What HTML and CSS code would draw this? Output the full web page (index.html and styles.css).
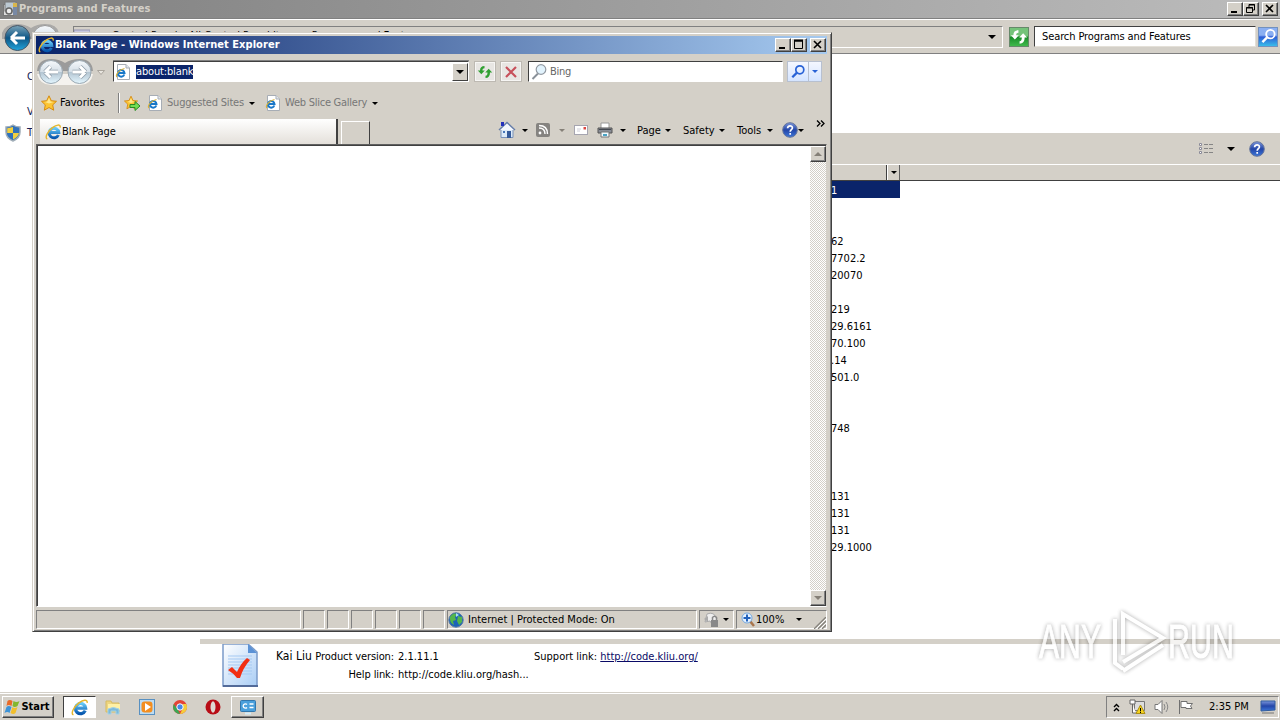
FILE: index.html
```
<!DOCTYPE html>
<html lang="en">
<head>
  <meta charset="UTF-8" />
  <meta name="viewport" content="width=device-width, initial-scale=1.0" />
  <title>Programs and Features</title>
  <link rel="stylesheet" href="styles.css">
</head>
<body>

  <!-- shared icons -->
  <svg class="defs" width="0" height="0">
    <defs>
      <linearGradient id="blue" x1="0" y1="0" x2="0" y2="1"><stop offset="0" stop-color="#65c9f8"/><stop offset="1" stop-color="#0757ae"/></linearGradient>
      <linearGradient id="glass" x1="0" y1="0" x2="0" y2="1"><stop offset="0" stop-color="#f6f9fc"/><stop offset=".48" stop-color="#d5dfe7"/><stop offset=".5" stop-color="#b3c4d1"/><stop offset="1" stop-color="#e4f7ff"/></linearGradient>
      <linearGradient id="navy" x1="0" y1="0" x2="0" y2="1"><stop offset="0" stop-color="#7aa3b8"/><stop offset=".5" stop-color="#0d5686"/><stop offset="1" stop-color="#21a5dc"/></linearGradient>
      <linearGradient id="helpblue" x1="0" y1="0" x2="0" y2="1"><stop offset="0" stop-color="#7b96dc"/><stop offset=".5" stop-color="#2446a8"/><stop offset="1" stop-color="#3c76d8"/></linearGradient>
      <linearGradient id="paper" x1="0" y1="0" x2="1" y2="1"><stop offset="0" stop-color="#ffffff"/><stop offset="1" stop-color="#a9cdf5"/></linearGradient>
    </defs>
    <symbol id="ie" viewBox="0 0 16 16">
      <path d="M13.4 11A4.800 4.800 0 1 1 13.800 8.600H5" fill="none" stroke="url(#blue)" stroke-width="3"/>
      <path d="M2.300 15C-.8 13.700 3 7 7.500 3.600 11.300.8 15.600-.3 15.200 3.600" fill="none" stroke="#e5b62d" stroke-width="1.400"/>
    </symbol>
    <symbol id="iepage" viewBox="0 0 16 16">
      <path d="M2.500.5H11L14.500 4V15.500H2.500Z" fill="#fff" stroke="#a7adb5"/>
      <path d="M11 .5V4H14.500" fill="#e3e8ee" stroke="#a7adb5"/>
      <path d="M9.300 10.500A3.300 3.300 0 1 1 9.500 9H4" fill="none" stroke="#1877c8" stroke-width="2"/>
      <path d="M2 13C0 11 4 5.500 9.500 4.500" fill="none" stroke="#d8b13c" stroke-width="1.200"/>
    </symbol>
    <symbol id="star" viewBox="0 0 16 16">
      <path d="M8 .8L10.300 5.700 15.500 6.300 11.700 9.900 12.700 15.200 8 12.500 3.300 15.200 4.300 9.900.5 6.300 5.700 5.700Z" fill="#fcc533" stroke="#d68b13"/>
      <path d="M8 2.800L9.500 6.500 12.500 7 8 8.500 4 7 6.300 6.500Z" fill="#ffe78c"/>
    </symbol>
    <symbol id="help" viewBox="0 0 16 16">
      <circle cx="8" cy="8" r="7.300" fill="url(#helpblue)" stroke="#66759b"/>
      <path d="M5.600 6.200C5.600 3 10.600 3.200 10.400 6 10.300 7.600 8.200 7.700 8.200 9.800M8.200 11V12.800" fill="none" stroke="#fff" stroke-width="1.700"/>
    </symbol>
    <symbol id="refresh" viewBox="0 0 16 16">
      <path d="M.8 6.500H3C3 3.500 4.500 2 7.500 2V4.200C6 4.200 5.500 5 5.500 6.500H7.800L4.300 10.300Z"/>
      <path d="M15.200 8.500H13C13 12 11.500 14 8.500 14V11.800C10 11.800 10.500 10.500 10.500 8.500H8.200L11.700 4.700Z"/>
    </symbol>
    <symbol id="lens" viewBox="0 0 16 16">
      <circle cx="9.800" cy="5.800" r="4" fill="none" stroke="currentColor" stroke-width="1.700"/>
      <path d="M6.700 8.900L2.300 13.300" stroke="currentColor" stroke-width="2.300"/>
    </symbol>
  </svg>

  <div class="window programs">
    <div class="title-bar inactive">
      <svg class="app-icon" width="16" height="16" viewBox="0 0 16 16">
        <rect x="1.500" y="3.500" width="10" height="11" fill="#ddd" stroke="#777"/>
        <rect x="3" y="1" width="11" height="9" fill="#bcc9d3" stroke="#777"/>
        <path d="M11 2H15V14H11Z" fill="#7889a5"/><path d="M11 2H15V6H11Z" fill="#d9b64c"/>
        <circle cx="7" cy="10" r="3" fill="#eee" stroke="#666" stroke-width="1.500"/>
      </svg>
      <span class="title">Programs and Features</span>
      <div class="controls">
        <button><svg width="14" height="12"><path d="M3 9H9" stroke="#000" stroke-width="2"/></svg></button>
        <button><svg width="14" height="12"><path d="M5 4V1.500H10.500V7H8M5 2H11M2.500 4.500H8.500V9.500H2.500ZM2 5H9" fill="none" stroke="#000"/></svg></button>
        <button class="close"><svg width="14" height="12"><path d="M3 2L10 9M10 2L3 9" stroke="#000" stroke-width="1.600"/></svg></button>
      </div>
    </div>

    <div class="explorer-nav">
      <svg class="round-nav" width="60" height="32" viewBox="0 0 60 32">
        <path d="M2 12Q5 3 17 3 25 3 31 7 37 3 45 3 57 3 59 12V18H2Z" fill="#aaa9a7"/>
        <circle cx="45" cy="17" r="12.500" fill="url(#glass)" stroke="#999"/>
        <circle cx="17.500" cy="17" r="12.500" fill="url(#navy)" stroke="#456"/>
        <path d="M11 17L17 11M11 17L17 23M12 17H25" fill="none" stroke="#fff" stroke-width="3"/>
      </svg>
      <div class="crumbs">
        <svg width="16" height="16"><path d="M0 1H16V12H0ZM0 4H16" fill="#c9c9df" stroke="#9696b4"/></svg>
        <span>Control Panel ▸ All Control Panel Items ▸ Programs and Features</span>
        <i class="arrow"></i>
      </div>
      <div class="go"><svg width="18" height="18"><use href="#refresh"/></svg></div>
      <div class="search-field">Search Programs and Features</div>
      <div class="search-go"><svg width="17" height="17"><use href="#lens"/></svg></div>
    </div>

    <div class="explorer-body">
      <div class="sidebar">
        <p class="home">Control Panel Home</p>
        <p class="link">View installed updates</p>
        <p class="link shield">
          <svg width="16" height="18" viewBox="0 0 16 18"><path d="M8 1Q11 3 15 3V8Q15 14 8 17 1 14 1 8V3Q5 3 8 1Z" fill="#3172ba" stroke="#a0adb8" stroke-width="1.500"/><path d="M8 9H2.200V4.200Q5 4 8 3ZM8 9H14Q13 13 8 15.500Z" fill="#f2cf40"/></svg>
          Turn Windows features on or off
        </p>
      </div>
      <div class="main">
        <div class="intro"></div>
        <div class="toolbar">
          <svg width="16" height="14"><path d="M1.500 1.500H3.500V3.500H1.500ZM1.500 5.500H3.500V7.500H1.500ZM1.500 9.500H3.500V11.500H1.500Z" fill="#fff" stroke="#8a8a98"/><path d="M6 2.500H15M6 6.500H15M6 10.500H15" stroke="#858585" stroke-dasharray="4 1"/></svg>
          <i class="arrow"></i>
          <svg width="16" height="16"><use href="#help"/></svg>
        </div>
        <div class="list-head">
          <div class="col"></div>
          <div class="col-arrow"><i class="arrow small"></i></div>
        </div>
        <ul class="versions">
          <li class="selected">1</li>
          <li></li>
          <li></li>
          <li>62</li>
          <li>7702.2</li>
          <li>20070</li>
          <li></li>
          <li>219</li>
          <li>29.6161</li>
          <li>70.100</li>
          <li>.14</li>
          <li>501.0</li>
          <li></li>
          <li></li>
          <li>748</li>
          <li></li>
          <li></li>
          <li></li>
          <li>131</li>
          <li>131</li>
          <li>131</li>
          <li>29.1000</li>
        </ul>
        <div class="details">
          <svg width="37" height="44" viewBox="0 0 37 44">
            <path d="M1 0H26L35 8V42H1Z" fill="url(#paper)" stroke="#7b9bc9" stroke-width="1.500"/>
            <path d="M1 42H36" stroke="#536b99" stroke-width="2"/>
            <path d="M26 0V9H35Z" fill="#5b92d6"/>
            <path d="M6 12H30M6 15H30M6 18H30M6 21H30M6 24H30M6 27H30M6 30H30" stroke="#a5c9f2"/>
            <path d="M6 26L10 23 15 28Q19 19 25 14L28 16Q21 24 18 34H15Q11 29 6 26Z" fill="#f22e12"/>
          </svg>
          <div class="publisher">Kai Liu</div>
          <dl class="info">
            <dt>Product version:</dt><dd>2.1.11.1</dd>
            <dt>Help link:</dt><dd>http://code.kliu.org/hash...</dd>
          </dl>
          <div class="support">Support link: <a href="#">http://code.kliu.org/</a></div>
        </div>
      </div>
    </div>
  </div>

  <div class="window ie">
    <div class="title-bar active">
      <svg class="app-icon" width="16" height="16"><use href="#ie"/></svg>
      <span class="title">Blank Page - Windows Internet Explorer</span>
      <div class="controls">
        <button><svg width="14" height="12"><path d="M3 9H9" stroke="#000" stroke-width="2"/></svg></button>
        <button><svg width="14" height="12"><path d="M2.500 1V9.500H10.500V1M2 2H11" fill="none" stroke="#000"/><path d="M2 1.500H11" stroke="#000" stroke-width="2"/></svg></button>
        <button class="close"><svg width="14" height="12"><path d="M3 2L10 9M10 2L3 9" stroke="#000" stroke-width="1.600"/></svg></button>
      </div>
    </div>

    <div class="address-row">
      <svg class="round-nav" width="72" height="28" viewBox="0 0 72 28">
        <path d="M2 13Q3 1 16 1 24 1 30 5 36 1 45 1 57 1 58 13Z" fill="#9b9b9b"/>
        <path d="M2 16Q5 27 16 27H45Q56 27 58 16Z" fill="#f5f3ef"/>
        <circle cx="16" cy="14" r="11.500" fill="url(#glass)" stroke="#9aa8b2"/>
        <circle cx="44.500" cy="14" r="11.500" fill="url(#glass)" stroke="#9aa8b2"/>
        <path d="M10 14L15.500 8.500M10 14L15.500 19.500M11 14H23M50.500 14L45 8.500M50.500 14L45 19.500M49 14H37.500" fill="none" stroke="#8e9ca8" stroke-width="4.500"/>
        <path d="M10 14L15.500 8.500M10 14L15.500 19.500M11 14H23M50.500 14L45 8.500M50.500 14L45 19.500M49 14H37.500" fill="none" stroke="#fff" stroke-width="3"/>
        <path d="M62.500 12.500H69.500L66 16.500Z" fill="#e8e5df" stroke="#aaa59d"/>
      </svg>
      <div class="address">
        <svg width="16" height="16"><use href="#iepage"/></svg>
        <span class="url">about:blank</span>
        <div class="drop"><i class="arrow"></i></div>
      </div>
      <div class="tool-btn refresh"><svg width="16" height="16"><use href="#refresh"/></svg></div>
      <div class="tool-btn"><svg width="14" height="14"><path d="M2 2L12 12M12 2L2 12" stroke="#c7505b" stroke-width="2.200"/></svg></div>
      <div class="bing">
        <svg width="18" height="18" viewBox="0 0 18 18"><path d="M1.500 16L7 10.500" stroke="#899199" stroke-width="2"/><circle cx="10" cy="6.500" r="4.800" fill="#e2f3fd" stroke="#9299a2" stroke-width="1.200"/></svg>
        <span>Bing</span>
      </div>
      <div class="search-split">
        <span><svg width="16" height="16"><use href="#lens"/></svg></span>
        <span><i class="arrow small"></i></span>
      </div>
    </div>

    <div class="favorites-row">
      <svg width="16" height="16"><use href="#star"/></svg>
      <span class="fav">Favorites</span>
      <svg class="add" width="17" height="16"><use href="#star" width="14" height="15"/><path d="M6 9.500H11V6.500L16 11 11 15.500V12.500H6Z" fill="#73dd52" stroke="#298a24"/></svg>
      <svg class="site-icon" width="16" height="16"><use href="#iepage"/></svg>
      <span class="sites">Suggested Sites</span>
      <i class="arrow small"></i>
      <svg class="slice-icon" width="16" height="16"><use href="#iepage"/></svg>
      <span class="slice">Web Slice Gallery</span>
      <i class="arrow small"></i>
    </div>

    <div class="tab-row">
      <div class="tab"><svg width="16" height="16"><use href="#ie"/></svg><span>Blank Page</span></div>
      <div class="new-tab"></div>
      <div class="commands">
        <svg class="home-icon" width="18" height="18" viewBox="0 0 18 18"><path d="M3 8H15V16.500H3Z" fill="#dceaf8" stroke="#7891b8"/><path d="M1 9L9 1.500 17 9" fill="#f4f7fc" stroke="#657da9" stroke-width="1.500"/><path d="M3 1H6V5H3Z" fill="#2431bb"/><path d="M9 10H13V17H9Z" fill="#355b9b"/><path d="M5 10H7V12H5Z" fill="#4676b8"/></svg>
        <i class="arrow small home-arrow"></i>
        <svg class="feed-icon" width="14" height="14" viewBox="0 0 14 14"><rect width="14" height="14" rx="2" fill="#858380"/><path d="M3 5Q9 5 9 11M3 2.500Q11.500 2.500 11.500 11" fill="none" stroke="#fff" stroke-width="1.400"/><circle cx="4" cy="10" r="1.400" fill="#fff"/></svg>
        <i class="arrow small gray feed-arrow"></i>
        <svg class="mail-icon" width="14" height="11"><rect x=".5" y=".5" width="13" height="9" fill="#fff" stroke="#a6a5b0"/><path d="M3 4H7M3 6H6" stroke="#d0d0da"/><path d="M9.500 2H12V4.500H9.500Z" fill="#db4742"/></svg>
        <svg class="print-icon" width="16" height="16" viewBox="0 0 16 16"><path d="M4 1H12V7H4Z" fill="#fff" stroke="#999"/><path d="M1 6H15V11H1Z" fill="#898d96" stroke="#555"/><path d="M2 7H14V8H2Z" fill="#454951"/><path d="M4 10H12V15H4Z" fill="#f3faff" stroke="#777"/><path d="M6 12H10V14H6Z" fill="#4ba3c3"/></svg>
        <i class="arrow small print-arrow"></i>
        <span class="cmd">Page</span><i class="arrow small"></i>
        <span class="cmd safety">Safety</span><i class="arrow small"></i>
        <span class="cmd tools">Tools</span><i class="arrow small"></i>
        <svg class="help-icon" width="16" height="16"><use href="#help"/></svg>
        <i class="arrow small"></i>
        <svg class="more" width="9" height="7"><path d="M1 .5L4 3.500 1 6.500M5 .5L8 3.500 5 6.500" fill="none" stroke="#000" stroke-width="1.300"/></svg>
      </div>
    </div>

    <div class="page">
      <div class="scrollbar">
        <div class="scroll-btn"><i class="arrow gray up"></i></div>
        <div class="scroll-btn"><i class="arrow gray"></i></div>
      </div>
    </div>

    <div class="status-bar">
      <div class="pane message"></div>
      <div class="pane"></div>
      <div class="pane"></div>
      <div class="pane"></div>
      <div class="pane"></div>
      <div class="pane"></div>
      <div class="pane"></div>
      <div class="pane zone">
        <svg width="16" height="16" viewBox="0 0 16 16"><circle cx="8" cy="8" r="7.200" fill="#1c63b8" stroke="#557aa5"/><path d="M2 5Q5 0 9 2L7 5 8 8 5 9 6 13Q1 10 2 5ZM10 4L14 5 14 10 11 13 9 9Z" fill="#54b64b"/><path d="M8 1L11 3 8 5Z" fill="#a8e3f2"/></svg>
        <span>Internet | Protected Mode: On</span>
      </div>
      <div class="pane filter">
        <svg width="18" height="16" viewBox="0 0 18 16"><path d="M4 2Q11-1 14 7L9 12 7 9 2 10Z" fill="#eee" stroke="#aaa"/><path d="M1 7L5 4V10Z" fill="#aaa"/><rect x="8" y="8" width="7" height="7" fill="#898989"/><path d="M9.500 8V5.500Q11.500 3 13.500 5.500V8" fill="none" stroke="#888" stroke-width="1.500"/></svg>
        <i class="arrow small"></i>
      </div>
      <div class="pane zoom">
        <svg width="15" height="16" viewBox="0 0 15 16"><path d="M8.500 8.500L13 14" stroke="#a9754c" stroke-width="2.500"/><circle cx="6" cy="6" r="5" fill="#e5f2ff" stroke="#75a9e0"/><path d="M2.500 6H9.500M6 2.500V9.500" stroke="#2362bc" stroke-width="2"/></svg>
        <span>100%</span>
        <i class="arrow small"></i>
        <svg class="grip" width="12" height="12"><path d="M0 12L12 0M4 12L12 4M8 12L12 8" stroke="#85827b" stroke-width="1.300"/><path d="M2 12L12 2M6 12L12 6" stroke="#fff"/></svg>
      </div>
    </div>
  </div>

  <div class="taskbar">
    <div class="start">
      <svg width="17" height="16" viewBox="0 0 16 16"><path d="M3 2Q5 0 8 2L7 7Q4 5 2 7Z" fill="#e96a27"/><path d="M9 2Q12 4 15 2L13 7Q10 9 8 7Z" fill="#83b72f"/><path d="M2 8Q4 6 7 8L5 14Q3 12 0 14Z" fill="#3d93d7"/><path d="M8 8Q10 10 13 8L11 14Q9 16 6 14Z" fill="#f2bf2c"/></svg>
      <span>Start</span>
    </div>
    <div class="task current"><svg width="17" height="17"><use href="#ie"/></svg></div>
    <div class="quick">
      <svg width="16" height="16" viewBox="0 0 16 16"><path d="M1 2H6L7 4H14V13H1Z" fill="#edd581" stroke="#d7bb60"/><path d="M3 5H15V11H3Z" fill="#fff0a5"/><path d="M3 15V10Q8 7 14 10V15H11V12H6V15Z" fill="#7db9da" stroke="#a2d2e6"/></svg>
      <svg width="16" height="16" viewBox="0 0 16 16"><rect x=".5" y=".5" width="15" height="15" fill="#bddcf2" stroke="#5890c1"/><rect x="2.500" y="2.500" width="11" height="11" rx="3" fill="#f38e20"/><path d="M6 4L12 8 6 12Z" fill="#fff"/></svg>
      <svg width="14" height="14" viewBox="0 0 14 14"><circle cx="7" cy="7" r="7" fill="#e44436"/><path d="M.8 4L5 10 7 14A7 7 0 0 1 .8 4Z" fill="#3ca653"/><path d="M7 14L10 8V4H13.300A7 7 0 0 1 7 14Z" fill="#f5cd3a"/><circle cx="7" cy="7" r="3.200" fill="#4788e8" stroke="#fff"/></svg>
      <svg width="16" height="16" viewBox="0 0 16 16"><ellipse cx="8" cy="8" rx="7.500" ry="7.500" fill="#b80d16"/><ellipse cx="8" cy="8" rx="2.500" ry="5.800" fill="#ded8d2"/></svg>
    </div>
    <div class="task"><svg width="16" height="15" viewBox="0 0 16 15"><rect x=".5" y=".5" width="15" height="11" rx="1" fill="#4aa0dc" stroke="#3277ad"/><path d="M7 4.500A2.200 2.200 0 1 0 7 7.500M9.500 4H13.500M9.500 7.500H13.500" fill="none" stroke="#fff" stroke-width="1.300"/><path d="M5 13.500H11" stroke="#d5edf8" stroke-width="2"/></svg></div>
    <div class="tray">
      <svg width="7" height="9"><path d="M1 4L3.500 1.500 6 4M1 8L3.500 5.500 6 8" fill="none" stroke="#000" stroke-width="1.400"/></svg>
      <svg class="network" width="17" height="16" viewBox="0 0 17 16"><path d="M5.500 2.500H15.500V11.500H5.500Z" fill="#ddd" stroke="#777"/><path d="M1 1H6V5H1ZM3.500 5V14H7" fill="#fff" stroke="#666"/><path d="M11.500 6L16 14.500H7Z" fill="#f5d21d" stroke="#ac8e14"/><path d="M11.500 9V12M11.500 12.700V14" stroke="#000"/></svg>
      <svg class="volume" width="16" height="16" viewBox="0 0 16 16"><path d="M1 5.500H4L8 1.500V14.500L4 10.500H1Z" fill="#fff" stroke="#777"/><path d="M10 5Q12 8 10 11M12 3Q15.500 8 12 13" fill="none" stroke="#888"/></svg>
      <svg class="flag" width="16" height="16" viewBox="0 0 16 16"><path d="M1.500 1V15M3 2.500H9V4.500H14.500L12.500 7 14 9.500H8V8.500H3Z" fill="#fff" stroke="#707070"/></svg>
      <span class="clock">2:35 PM</span>
      <svg class="monitor" width="16" height="14" viewBox="0 0 16 14"><path d="M1 1L15 1V10L1 11Z" fill="url(#helpblue)" stroke="#315d9e"/><path d="M2 13H14" stroke="#777"/></svg>
    </div>
  </div>

  <svg class="watermark" width="212" height="80" viewBox="0 0 212 80">
    <text x="7" y="56" textLength="62" lengthAdjust="spacingAndGlyphs">ANY</text>
    <text x="136" y="56" textLength="66" lengthAdjust="spacingAndGlyphs">RUN</text>
    <path d="M91 53V12L131 36 91 60M91 69L131 43M83 17V61L91 67"/>
  </svg>

</body>
</html>
```

FILE: styles.css
```
* {
  box-sizing: border-box;
}

body {
  position: relative;
  width: 1280px;
  height: 720px;
  margin: 0;
  overflow: hidden;
  background: white;
  color: #000;
  font-family: "DejaVu Sans Condensed", "DejaVu Sans", sans-serif;
  font-stretch: condensed;
  font-size: 11px;
  line-height: 14px;
  white-space: nowrap;
}

svg {
  display: block;
  flex: none;
}

.defs {
  position: absolute;
}

ul, p, dl, dd {
  margin: 0;
  padding: 0;
  list-style: none;
}

.arrow {
  flex: none;
  width: 0;
  height: 0;
  border: 4px solid transparent;
  border-top-color: #000;
  border-bottom: 0;
}

.arrow.small {
  border-width: 3px;
  border-bottom: 0;
}

.arrow.gray {
  border-top-color: #858078;
}

.arrow.up {
  transform: rotate(180deg);
}

/* windows */
.window {
  position: absolute;
  display: flex;
  flex-direction: column;
}

.programs {
  left: 0;
  top: 0;
  width: 1280px;
  height: 692px;
}

.ie {
  left: 32px;
  top: 32px;
  width: 800px;
  height: 600px;
  padding: 2px 4px 2px 2px;
  background: #d4d0c8;
  border: 1px solid #d4d0c8;
  border-right-color: #404040;
  border-bottom-color: #404040;
  box-shadow: inset 1px 1px #fff, inset -1px -1px #808080;
}

.title-bar {
  display: flex;
  align-items: center;
  flex: none;
  height: 18px;
  padding: 0 2px;
}

.title-bar.inactive {
  padding-right: 2px;
  background: linear-gradient(90deg, #808080, #bcbcbc);
  color: #d4d0c8;
}

.title-bar.active {
  margin: 1px 0 0 1px;
  padding-right: 1px;
  background: linear-gradient(90deg, #0a246a, #a6caf0);
  color: #fff;
}

.title {
  flex: 1;
  margin-left: 1px;
  font-weight: bold;
  letter-spacing: 0.05px;
}

.controls {
  display: flex;
}

.controls button {
  width: 16px;
  height: 14px;
  padding: 0;
  background: #d4d0c8;
  border: 1px solid;
  border-color: #fff #404040 #404040 #fff;
  box-shadow: inset -1px -1px #808080;
}

.controls .close {
  margin-left: 3px;
}

/* programs and features */
.explorer-nav {
  display: flex;
  align-items: center;
  flex: none;
  height: 36px;
  padding: 2px 2px 0 0;
  background: #d4d0c8;
  border-bottom: 1px solid #808080;
  box-shadow: inset 0 1px #808080, inset 0 2px #fff;
}

.crumbs {
  display: flex;
  align-items: center;
  flex: 1;
  height: 22px;
  margin: 0 6px 0 13px;
  padding-right: 6px;
  border: 1px solid;
  border-color: #808080 #fff #fff #808080;
}

.crumbs span {
  flex: 1;
  margin: -1px 0 0 22px;
}

.go,
.search-go {
  display: grid;
  place-items: center;
  width: 20px;
  height: 20px;
  border: 1px solid #66896a;
  background: linear-gradient(#75c37a 45%, #198c29 50%, #3fb94b);
  fill: #fff;
}

.search-field {
  width: 222px;
  height: 21px;
  margin-left: 5px;
  padding: 3px 7px;
  background: #fff;
  border: 1px solid;
  border-color: #404040 #e4e0d8 #e4e0d8 #404040;
  letter-spacing: -0.1px;
}

.search-go {
  margin-left: 2px;
  border-color: #7391bd;
  background: linear-gradient(#8aaff2 40%, #2d5dd6 50%, #39bcea);
  color: #fff;
}

.explorer-body {
  display: flex;
  flex: 1;
  min-height: 0;
}

.sidebar {
  width: 200px;
  padding: 16px 0 0 27px;
  color: #151c55;
}

.sidebar .home {
  margin-bottom: 21px;
}

.shield {
  display: flex;
  align-items: center;
  gap: 6px;
  margin: 5px 0 0 -22px;
}

.main {
  display: flex;
  flex: 1;
  flex-direction: column;
}

.intro {
  height: 79px;
}

.toolbar {
  display: flex;
  align-items: center;
  justify-content: flex-end;
  height: 31px;
  padding-right: 15px;
  background: #d4d0c8;
}

.toolbar .arrow {
  margin: 0 14px 0 13px;
}

.list-head {
  display: flex;
  height: 17px;
  background: #d4d0c8;
  border-top: 1px solid #fff;
  border-bottom: 1px solid #404040;
}

.col {
  width: 687px;
  border-right: 1px solid #404040;
}

.col-arrow {
  display: grid;
  place-items: center;
  width: 13px;
  border-left: 1px solid #fff;
  border-right: 1px solid #606060;
}

.versions {
  flex: 1;
}

.versions li {
  width: 700px;
  height: 17px;
  padding: 3px 0 0 631px;
}

.versions .selected {
  background: #0a246a;
  color: #fff;
}

.details {
  display: flex;
  height: 53px;
  padding-left: 22px;
  border-top: 5px solid #d4d0c8;
}

.publisher {
  width: 39px;
  margin: 5px 0 0 17px;
  font-size: 12px;
}

.info {
  display: grid;
  grid-template-columns: 79px 136px;
  grid-auto-rows: 18px;
  column-gap: 4px;
  padding-top: 6px;
}

.info dt {
  justify-self: end;
  letter-spacing: -0.1px;
}

.support {
  padding-top: 6px;
}

.support a {
  color: #0a0a66;
}

/* internet explorer */
.address-row {
  display: flex;
  align-items: center;
  height: 35px;
}

.address {
  display: flex;
  align-items: center;
  width: 356px;
  height: 21px;
  margin-left: 6px;
  padding-left: 1px;
  background: #fff;
  border: 1px solid;
  border-color: #404040 #fff #fff #404040;
  box-shadow: 0 -1px #808080;
}

.url {
  margin: 0 auto 0 5px;
  background: #0a246a;
  color: #fff;
  letter-spacing: -0.15px;
}

.drop {
  display: grid;
  place-items: center;
  width: 16px;
  height: 18px;
  background: #d4d0c8;
  border: 1px solid;
  border-color: #fff #404040 #404040 #fff;
}

.tool-btn {
  display: grid;
  place-items: center;
  width: 22px;
  height: 21px;
  margin-left: 4px;
  background: #e8e6e3;
  border: 1px solid #bdb9b2;
  box-shadow: inset 0 0 0 1px #f7f6f4;
}

.tool-btn.refresh {
  margin-left: 5px;
  fill: #31a032;
}

.bing {
  display: flex;
  align-items: center;
  width: 255px;
  height: 21px;
  margin-left: 6px;
  padding-left: 2px;
  background: #fff;
  border: 1px solid;
  border-color: #404040 #fff #fff #404040;
  color: #666;
  letter-spacing: -0.3px;
}

.bing span {
  margin-left: 1px;
}

.search-split {
  display: flex;
  width: 35px;
  height: 21px;
  margin-left: 4px;
  border: 1px solid #b7c0d0;
  background: linear-gradient(#f4f7ff, #d4e4ff);
  color: #2862d6;
}

.search-split span {
  display: grid;
  place-items: center;
  width: 20px;
}

.search-split span + span {
  width: 13px;
  border-left: 1px solid #b7c0d0;
}

.search-split .arrow {
  border-top-color: #2862d6;
}

.favorites-row {
  display: flex;
  align-items: center;
  height: 28px;
  padding-left: 6px;
  color: #777;
}

.fav {
  width: 59px;
  margin-left: 3px;
  height: 20px;
  padding-top: 3px;
  border-right: 1px solid #808080;
  box-shadow: 1px 0 #fff;
  color: #000;
}

.add {
  margin-left: 5px;
}

.site-icon {
  margin-left: 6px;
}

.sites {
  width: 79px;
  margin: 0 3px 0 4px;
  letter-spacing: -0.2px;
}

.slice-icon {
  margin-left: 10px;
}

.slice {
  width: 84px;
  margin: 0 3px 0 4px;
  letter-spacing: -0.25px;
}

.tab-row {
  display: flex;
  align-items: flex-end;
  height: 27px;
  padding-left: 5px;
}

.tab {
  display: flex;
  align-items: center;
  width: 298px;
  height: 25px;
  padding-left: 5px;
  background: linear-gradient(#fff, #e4e0da);
  border-right: 2px solid #404040;
  letter-spacing: -0.1px;
}

.tab span {
  margin: 1px 0 0 1px;
}

.new-tab {
  width: 29px;
  height: 23px;
  margin-left: 3px;
  border: 1px solid #fff;
  border-right: 1px solid #404040;
  border-bottom: 0;
}

.commands {
  display: flex;
  align-items: center;
  height: 28px;
  margin-left: 128px;
}

.home-arrow {
  margin-left: 6px;
}

.feed-icon {
  margin-left: 8px;
}

.feed-arrow {
  margin-left: 9px;
}

.mail-icon {
  margin-left: 9px;
}

.print-icon {
  margin-left: 9px;
}

.print-arrow {
  margin-left: 7px;
}

.cmd {
  width: 25px;
  margin: 1px 3px 0 11px;
}

.safety {
  width: 33px;
  margin-left: 12px;
}

.tools {
  width: 27px;
  margin-left: 12px;
}

.help-icon {
  margin-left: 9px;
}

.more {
  margin: -13px 0 0 12px;
}

.page {
  display: flex;
  flex: 1;
  margin-left: 1px;
  background: #fff;
  border: 1px solid;
  border-color: #606060 #d4d0c8 #fff #606060;
  box-shadow: inset 1px 1px #404040;
}

.scrollbar {
  display: flex;
  flex-direction: column;
  justify-content: space-between;
  width: 16px;
  margin: 1px 0 0 auto;
  background: repeating-conic-gradient(#fff 0 25%, #d4d0c8 0 50%) 0 0 / 2px 2px;
}

.scroll-btn {
  display: grid;
  place-items: center;
  height: 16px;
  background: #d4d0c8;
  border: 1px solid;
  border-color: #fff #404040 #404040 #fff;
  box-shadow: inset -1px -1px #808080;
}

.status-bar {
  display: flex;
  gap: 2px;
  height: 22px;
  padding: 3px 0 0 1px;
}

.pane {
  display: flex;
  align-items: center;
  flex: none;
  width: 22px;
  height: 19px;
  border: 1px solid;
  border-color: #808080 #fff #fff #808080;
}

.message {
  width: 265px;
}

.zone {
  width: 250px;
}

.zone span {
  margin-left: 4px;
}

.filter {
  width: 35px;
  padding-left: 3px;
}

.filter .arrow {
  margin-left: 2px;
}

.zoom {
  width: 91px;
  padding-left: 4px;
}

.zoom span {
  width: 42px;
}

.zoom .arrow {
  margin-left: 1px;
}

.grip {
  margin: 6px 0 0 12px;
}

/* taskbar */
.taskbar {
  position: absolute;
  left: 0;
  right: 0;
  bottom: 0;
  display: flex;
  align-items: center;
  height: 28px;
  padding: 1px 1px 0 2px;
  background: #d4d0c8;
  border-top: 1px solid #d4d0c8;
  box-shadow: inset 0 1px #fff;
}

.start,
.task {
  display: flex;
  align-items: center;
  justify-content: center;
  width: 52px;
  height: 22px;
  border: 1px solid;
  border-color: #fff #404040 #404040 #fff;
  box-shadow: inset -1px -1px #808080;
  font-weight: bold;
}

.start {
  padding-right: 2px;
}

.task {
  width: 33px;
}

.task.current {
  margin-left: 9px;
  background: #fff;
  border-color: #404040 #fff #fff #404040;
  box-shadow: none;
}

.quick {
  display: flex;
  align-items: center;
  gap: 18px;
  margin: 0 10px 0 9px;
}

.tray {
  display: flex;
  align-items: center;
  width: 173px;
  height: 22px;
  margin-left: auto;
  padding-left: 6px;
  border: 1px solid;
  border-color: #808080 #fff #fff #808080;
}

.network {
  margin-left: 9px;
}

.volume {
  margin-left: 8px;
}

.flag {
  margin-left: 8px;
}

.clock {
  width: 41px;
  margin-left: 15px;
}

.monitor {
  margin-left: 10px;
}

.watermark {
  position: absolute;
  left: 1032px;
  top: 602px;
  filter: drop-shadow(0 0 2px rgba(0, 0, 0, 0.45));
  opacity: 0.75;
}

.watermark text {
  fill: #fff;
  stroke: #fff;
  stroke-width: 1;
  font: 49px "Liberation Sans", Arial, sans-serif;
}

.watermark path {
  fill: none;
  stroke: #fff;
  stroke-width: 4;
}
```
